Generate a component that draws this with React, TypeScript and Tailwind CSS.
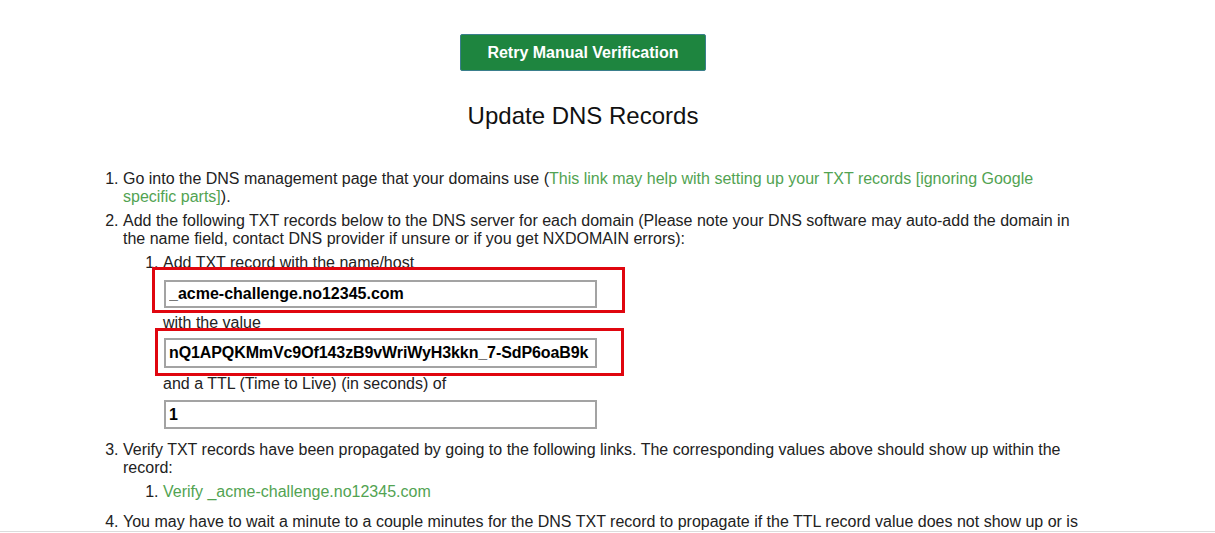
import { useState } from 'react';

const records = [
  {
    host: '_acme-challenge.no12345.com',
    value: 'nQ1APQKMmVc9Of143zB9vWriWyH3kkn_7-SdP6oaB9k',
    ttl: '1',
  },
];

export default function App() {
  const [retrying, setRetrying] = useState(false);

  return (
    <div className="min-h-screen bg-white text-[#222] font-['Liberation_Sans',Arial,sans-serif] text-[16px] leading-[18px]">
      <div className="ml-[83px] w-[1000px] pt-[34px]">
        <div className="flex justify-center">
          <button
            onClick={() => setRetrying(!retrying)}
            className="w-[246px] h-[37px] rounded-[2px] border border-[#3a7f8c] bg-[#1e853f] text-white font-bold text-[16px]"
          >
            Retry Manual Verification
          </button>
        </div>

        <h1 className="mt-[31px] text-center text-[24px] leading-[28px] font-normal text-[#111]">Update DNS Records</h1>

        <ol className="list-decimal pl-10 mt-[40px]">
          <li className="mb-[6px]">
            Go into the DNS management page that your domains use (
            <a className="text-[#52a352]">This link may help with setting up your TXT records [ignoring Google specific parts]</a>
            ).
          </li>
          <li className="mb-[6px]">
            Add the following TXT records below to the DNS server for each domain (Please note your DNS software may auto-add the domain in the name field, contact DNS provider if unsure or if you get NXDOMAIN errors):
            <ol className="list-decimal pl-10 mt-[6px]">
              {records.map((r) => (
                <li key={r.host} className="relative">
                  Add TXT record with the name/host
                  <input
                    readOnly
                    value={r.host}
                    className="block mt-[8px] ml-px w-[433px] h-[28px] border-2 border-[#a3a3a3] pl-[3px] pr-0 font-bold text-[16px] text-black outline-none"
                  />
                  <div className="mt-[6px]">with the value</div>
                  <input
                    readOnly
                    value={r.value}
                    className="block mt-[6px] ml-px w-[433px] h-[30px] border-2 border-[#a3a3a3] pl-[3px] pr-0 font-bold text-[16px] tracking-[-0.1px] text-black outline-none"
                  />
                  <div className="mt-[7px]">and a TTL (Time to Live) (in seconds) of</div>
                  <input
                    readOnly
                    value={r.ttl}
                    className="block mt-[7px] ml-px w-[433px] h-[29px] border-2 border-[#a3a3a3] pl-[3px] pr-0 font-bold text-[16px] text-black outline-none"
                  />
                  <div className="absolute left-[-11px] top-[13px] w-[473px] h-[46px] border-[3px] border-[#e0060f] pointer-events-none" />
                  <div className="absolute left-[-8px] top-[74px] w-[469px] h-[48px] border-[3px] border-[#e0060f] pointer-events-none" />
                </li>
              ))}
            </ol>
          </li>
          <li className="mt-[12px] pb-[12px]">
            Verify TXT records have been propagated by going to the following links. The corresponding values above should show up within the record:
            <ol className="list-decimal pl-10 mt-[6px]">
              {records.map((r) => (
                <li key={r.host}>
                  <a className="text-[#52a352]">Verify {r.host}</a>
                </li>
              ))}
            </ol>
          </li>
          <li>
            You may have to wait a minute to a couple minutes for the DNS TXT record to propagate if the TTL record value does not show up or is incorrect.
          </li>
        </ol>
      </div>
      <div className="fixed left-0 right-0 bottom-0 h-[2px] border-t border-[#dcdcdc] bg-white" />
    </div>
  );
}
